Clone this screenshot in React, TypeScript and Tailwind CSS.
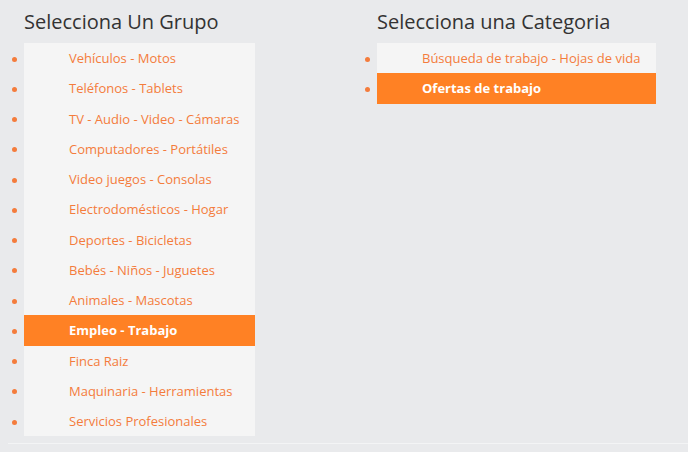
import React from "react";

const grupos = [
  "Vehículos - Motos",
  "Teléfonos - Tablets",
  "TV - Audio - Video - Cámaras",
  "Computadores - Portátiles",
  "Video juegos - Consolas",
  "Electrodomésticos - Hogar",
  "Deportes - Bicicletas",
  "Bebés - Niños - Juguetes",
  "Animales - Mascotas",
  "Empleo - Trabajo",
  "Finca Raiz",
  "Maquinaria - Herramientas",
  "Servicios Profesionales",
];

const categorias = ["Búsqueda de trabajo - Hojas de vida", "Ofertas de trabajo"];

const bullet =
  "relative pl-[45px] h-[30.25px] leading-[31px] text-[13px] before:content-[''] before:absolute before:left-[-12px] before:top-[13.5px] before:w-[5px] before:h-[5px] before:rounded-full before:bg-[#f47c3c]";

function List({ items, active, width }: { items: string[]; active: string; width: string }) {
  return (
    <ul className={`bg-[#f5f5f5] ${width}`}>
      {items.map((t) => (
        <li
          key={t}
          className={
            t === active
              ? `${bullet} bg-[#ff8124] text-white font-bold`
              : `${bullet} text-[#f47c3c]`
          }
        >
          {t}
        </li>
      ))}
    </ul>
  );
}

export default function App() {
  return (
    <div className="w-[688px] h-[452px] bg-[#e9eaec] overflow-hidden" style={{ fontFamily: '"Open Sans", sans-serif' }}>
      <div className="flex pl-[24px]">
        <div className="w-[353px]">
          <h2 className="pt-[8px] text-[20px] leading-[28px] text-[#333] mb-[7px]">Selecciona Un Grupo</h2>
          <List items={grupos} active="Empleo - Trabajo" width="w-[231px]" />
        </div>
        <div>
          <h2 className="pt-[8px] text-[20px] leading-[28px] text-[#333] mb-[7px]">Selecciona una Categoria</h2>
          <List items={categorias} active="Ofertas de trabajo" width="w-[279px]" />
        </div>
      </div>
      <div className="ml-[8px] mt-[7px] border-t border-[#f3f4f5]" />
    </div>
  );
}
